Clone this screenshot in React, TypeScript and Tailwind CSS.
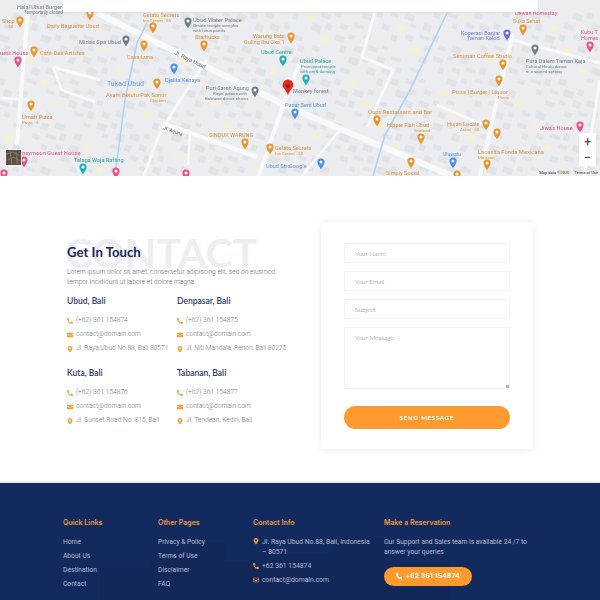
import { FaPhoneAlt, FaEnvelope, FaRegEnvelope, FaMapMarkerAlt } from "react-icons/fa";

type Label = [string, number, number, string, number?, string?];

const ORANGE = "#dc9344";
const PINK = "#e4558a";
const TEAL = "#2fa5a8";
const BLUE = "#5b93ea";
const GREY = "#76808a";
const INDIGO = "#7579d8";

const labels: Label[] = [
  ["Halal Ubud Burger", 17, 9, GREY, 5.6],
  ["Temporarily closed", 24, 14, GREY, 4.6],
  ["Shop", 2, 23, ORANGE, 5.6],
  ["· $$", 6, 28, ORANGE, 4.4],
  ["Gelato Secrets", 143, 17, ORANGE, 5.6],
  ["Ice Cream · $$", 143, 22, ORANGE, 4.4],
  ["Daily Baguette Ubud", 47, 28, ORANGE, 5.8],
  ["Ubud Water Palace", 193, 22, GREY, 5.8],
  ["Ornate temple complex", 193, 27, GREY, 4.4],
  ["with lotus ponds", 193, 32, GREY, 4.4],
  ["Starbucks", 195, 39, ORANGE, 5.6],
  ["Midas Spa Ubud", 79, 44, GREY, 5.8],
  ["Warung Babi", 253, 38, ORANGE, 5.6],
  ["Guling Ibu Oka 1", 244, 44, ORANGE, 5.6],
  ["Ubud Centre", 261, 54, TEAL, 5.6],
  ["uest House", 0, 55, PINK, 5.6],
  ["Café Des Artistes", 40, 55, ORANGE, 5.8],
  ["Casa Luna", 127, 59, ORANGE, 5.6],
  ["Tukad Ubud", 107, 86, "#6a9edc", 7],
  ["Djelita Kebaya", 165, 82, BLUE, 5.6],
  ["Ayam Betutu Pak Sanur", 106, 97, ORANGE, 5.8],
  ["Chicken", 150, 102, ORANGE, 4.4],
  ["Puri Saren Agung", 206, 90, GREY, 5.6],
  ["Royal palace with", 213, 95, GREY, 4.4],
  ["Balinese dance shows", 205, 100, GREY, 4.4],
  ["Umah Pizza", 22, 119, ORANGE, 5.8],
  ["Pizza · $", 22, 124, ORANGE, 4.4],
  ["SINDUK WARUNG", 209, 137, ORANGE, 5.6],
  ["Gelato Secrets", 275, 150, ORANGE, 5.6],
  ["Ice Cream · $$", 275, 155, ORANGE, 4.4],
  ["neymoon Guest House", 22, 155, PINK, 5.8],
  ["Telaga Waja Rafting", 74, 162, TEAL, 5.6],
  ["Ubud Stro", 266, 168, BLUE, 5.6],
  ["Google", 289, 168, "#8596b0", 5.6],
  ["Pasar Seni Ubud", 285, 107, BLUE, 5.6],
  ["Ubud Palace", 300, 63, TEAL, 5.6],
  ["Prominent temple", 301, 68, TEAL, 4.4],
  ["with art & dancing", 300, 73, TEAL, 4.4],
  ["Monkey forest", 293, 93, GREY, 5.6],
  ["Dewan Homestay", 515, 15, PINK, 5.4],
  ["Suka Sehat", 513, 23, ORANGE, 5.4],
  ["Koperasi Banjar", 461, 35, INDIGO, 5.6],
  ["Taman Kelod", 467, 40, INDIGO, 5.6],
  ["Kubu T", 581, 34, PINK, 5.4],
  ["Homes", 581, 40, PINK, 5.4],
  ["Seniman Coffee Studio", 453, 58, ORANGE, 5.8],
  ["Pura Dalem Taman Kaja", 526, 63, GREY, 5.6],
  ["Cultural Hindu dance", 526, 68, GREY, 4.4],
  ["in a sacred setting", 526, 73, GREY, 4.4],
  ["Pizza | Burger | Liquor", 452, 94, ORANGE, 5.8],
  ["Pizza", 498, 99, ORANGE, 4.4],
  ["Oops Restaurant and Bar", 368, 114, ORANGE, 5.8],
  ["Hippie Fish Ubud", 387, 127, ORANGE, 5.6],
  ["Seafood", 414, 132, ORANGE, 4.4],
  ["Hujan Locale", 447, 126, ORANGE, 5.6],
  ["Asian · $$", 460, 131, ORANGE, 4.4],
  ["Jiwa's House", 540, 130, PINK, 5.6],
  ["Lacasita Fonda Mexicana", 478, 154, ORANGE, 5.8],
  ["Mexican", 478, 159, ORANGE, 4.4],
  ["Uluwatu", 443, 156, BLUE, 5],
  ["Simply Social", 386, 175, ORANGE, 5.6],
];

const pins: [number, number, string][] = [
  [20, 22, "#e8962a"], [90, 15, "#e8962a"], [153, 28, "#e8962a"], [144, 46, "#e8962a"], [34, 52, "#e8962a"],
  [157, 84, "#e8962a"], [31, 106, "#e8962a"], [245, 144, "#e8962a"], [270, 149, "#e8962a"], [204, 46, "#e8962a"],
  [291, 38, "#e8962a"], [523, 30, "#e8962a"], [503, 65, "#e8962a"], [499, 81, "#e8962a"], [377, 121, "#e8962a"],
  [421, 139, "#e8962a"], [486, 125, "#e8962a"], [497, 134, "#e8962a"], [411, 163, "#e8962a"], [487, 165, "#e8962a"],
  [457, 176, "#e8962a"],
  [18, 62, "#ec4f86"], [24, 162, "#ec4f86"], [4, 175, "#ec4f86"], [116, 173, "#ec4f86"], [186, 175, "#ec4f86"],
  [590, 47, "#ec4f86"], [580, 127, "#ec4f86"],
  [283, 61, "#22b0b5"], [83, 169, "#22b0b5"], [306, 80, "#22b0b5"],
  [174, 69, "#4a8fee"], [295, 114, "#4a8fee"], [321, 164, "#4a8fee"], [453, 163, "#4a8fee"],
  [126, 41, "#6f7f8a"], [188, 23, "#6f7f8a"], [255, 92, "#6f7f8a"], [535, 50, "#6f7f8a"],
  [507, 35, "#6b6fd4"],
];

const roads: [string, number][] = [
  ["M97 13 L213 70 L300 112 L443 172 L470 182", 6],
  ["M28 10 L22 80 L17 145", 4],
  ["M207 60 L180 100 L160 133 L143 178", 3],
  ["M300 62 L285 100 L258 178", 4],
  ["M513 33 L497 100 L480 176", 4],
  ["M513 40 L600 63", 3],
  ["M375 12 L362 57 L393 70 L367 127", 3],
  ["M163 123 L257 157", 4],
  ["M53 67 L100 80", 3],
  ["M53 67 L62 90 L95 102", 2.5],
  ["M0 98 L30 100", 2.5],
  ["M437 105 L500 132", 2.5],
  ["M600 80 L584 178", 3],
  ["M340 130 L300 178", 2.5],
  ["M190 135 L188 165", 2.5],
];

// filler buildings on a loose grid, no randomness so the picture stays put
const blocks = Array.from({ length: 43 * 15 }, (_, i) => {
  const c = i % 43;
  const r = Math.floor(i / 43);
  const k = c * 7 + r * 13;
  return { x: c * 14 + (r % 2) * 5, y: 12 + r * 11, w: 6 + (k % 3) * 2, h: 4 + (k % 4), skip: k % 5 === 0, yellow: k % 11 === 0 };
}).filter((b) => !b.skip);

function MapArt() {
  return (
    <svg viewBox="0 0 600 176" className="block h-[176px] w-[600px] blur-[0.4px]">
      <rect width="600" height="176" fill="#ebedf0" />
      {blocks.map((b, i) => (
        <rect
          key={i}
          x={b.x}
          y={b.y}
          width={b.w}
          height={b.h}
          fill={b.yellow ? "#f6efd3" : "#e1e3e7"}
          transform={`rotate(20 ${b.x} ${b.y})`}
        />
      ))}
      {roads.map(([d, w], i) => (
        <path key={i} d={d} fill="none" stroke="#f8f9fa" strokeWidth={w} strokeLinejoin="round" />
      ))}
      <path d="M147 23 L137 43 L125 100 L115 176" fill="none" stroke="#b0d2f3" strokeWidth="1.5" />
      <path d="M447 13 L410 90 L385 135 L373 176" fill="none" stroke="#b0d2f3" strokeWidth="1.7" />
      <text x="174" y="54" fontSize="5.6" fill="#6a6a6a" transform="rotate(26 174 54)" fontFamily="Roboto, sans-serif">Jl. Raya Ubud</text>
      <text x="163" y="129" fontSize="4.8" fill="#6a6a6a" transform="rotate(20 163 129)" fontFamily="Roboto, sans-serif">Jl. Arjuna</text>
      {pins.map(([x, y, c], i) => (
        <g key={i}>
          <path d={`M${x} ${y + 5.5} C${x - 1} ${y + 3} ${x - 3.6} ${y + 1} ${x - 3.6} ${y - 2} A3.600 3.600 0 1 1 ${x + 3.6} ${y - 2} C${x + 3.6} ${y + 1} ${x + 1} ${y + 3} ${x} ${y + 5.5}Z`} fill={c} />
          <circle cx={x} cy={y - 2} r="1.500" fill="#ffffff" />
        </g>
      ))}
      {labels.map(([t, x, y, c, s], i) => (
        <text key={i} x={x} y={y} fill={c} fontSize={s} fontFamily="Roboto, sans-serif">{t}</text>
      ))}
      <path d="M288 96 C286 90 282.500 88 282.500 86 A5.500 6 0 1 1 293.500 86 C293.500 88 290 90 288 96Z" fill="#e02b20" transform="translate(0 -0.500)" />
      <circle cx="288" cy="86" r="1.700" fill="#8f1610" />
    </svg>
  );
}

function MapSection() {
  return (
    <section className="relative h-[176px] overflow-hidden">
      <MapArt />
      {/* site header sliding over the map */}
      <div className="absolute left-[63px] top-0 h-[12px] w-[475px] bg-white shadow-[0_1px_2px_rgba(0,0,0,0.08)]" />
      <svg viewBox="0 0 17 17" className="absolute left-[5px] top-[149px] h-[17px] w-[17px]">
        <rect width="17" height="17" fill="#f4f4f4" />
        <rect x="1" y="1" width="15" height="15" fill="#5d5345" />
        <path d="M2 5L8 3L14 6M3 11L9 8L15 12M5 2L7 15M11 3L12 15" stroke="#857a66" strokeWidth="1" fill="none" />
      </svg>
      <div className="absolute left-[579px] top-[133px] flex h-[33px] w-[17px] flex-col items-center justify-center bg-white text-[#555]">
        <span className="text-[13px] leading-[16px] font-['Roboto',sans-serif] font-medium">+</span>
        <span className="text-[13px] leading-[16px] font-['Roboto',sans-serif] font-medium">−</span>
      </div>
      <div className="absolute bottom-0 right-[2px] flex gap-[5px] text-[4px] leading-[7px] text-[#333] font-['Roboto',sans-serif]">
        <span>Map data ©2020</span>
        <span>Terms of Use</span>
      </div>
    </section>
  );
}

const offices = [
  { city: "Ubud, Bali", phone: "(+62) 361 154874", addr: "Jl. Raya Ubud No.88, Bali 80571" },
  { city: "Denpasar, Bali", phone: "(+62) 361 154875", addr: "Jl. Niti Mandala, Renon, Bali 80225" },
  { city: "Kuta, Bali", phone: "(+62) 361 154876", addr: "Jl. Sunset Road No. 815, Bali" },
  { city: "Tabanan, Bali", phone: "(+62) 361 154877", addr: "Jl. Tendean, Kediri, Bali" },
];

function Office({ office }: { office: (typeof offices)[number] }) {
  const rows = [
    { icon: <FaPhoneAlt className="h-[6px] w-[6px]" />, text: office.phone },
    { icon: <FaEnvelope className="h-[6px] w-[6px]" />, text: "contact@domain.com" },
    { icon: <FaMapMarkerAlt className="h-[6.500px] w-[6.500px]" />, text: office.addr },
  ];
  return (
    <div className="h-[72px]">
      <h4 className="text-[8.500px] leading-[12px] font-semibold text-[#2b3a67] font-['Lato',sans-serif]">{office.city}</h4>
      <ul className="mt-[9px] flex flex-col gap-[4.300px]">
        {rows.map((r) => (
          <li key={r.text} className="flex h-[10px] items-center gap-[3px] text-[6.650px] whitespace-nowrap font-light text-[#70747c] font-['Roboto',sans-serif]">
            <span className="flex w-[6px] justify-center text-[#ff9a2e]">{r.icon}</span>
            {r.text}
          </li>
        ))}
      </ul>
    </div>
  );
}

function ContactForm() {
  const inputCls =
    "h-[20px] w-full border border-[#f4f4f6] bg-white px-[10px] text-[6.500px] font-light font-['Lato',sans-serif] placeholder:text-[#6a6d78]";
  return (
    <form className="flex h-[227px] w-[212px] flex-col rounded-[3px] bg-white px-[23px] pt-[21px] shadow-[0_1px_8px_rgba(20,30,70,0.08)]">
      <div className="flex flex-col gap-[8px]">
        <input className={inputCls} placeholder="Your Name" />
        <input className={inputCls} placeholder="Your Email" />
        <input className={inputCls} placeholder="Subject" />
        <div className="relative h-[62px]">
          <textarea
            className="h-[62px] w-full resize-none border border-[#f4f4f6] bg-white px-[10px] py-[5px] text-[6.500px] font-light font-['Lato',sans-serif] placeholder:text-[#6a6d78]"
            placeholder="Your Message"
          />
          {/* tiny resize grip */}
          <span className="absolute bottom-[1px] right-[1px] h-[3px] w-[3px] bg-[#b5b5b5]" />
        </div>
      </div>
      <button
        type="button"
        className="mt-[17px] h-[23px] rounded-full bg-[#ff9a2e] text-[6px] font-bold tracking-[0.8px] text-white font-['Lato',sans-serif]"
      >
        SEND MESSAGE
      </button>
    </form>
  );
}

function ContactSection() {
  return (
    <section className="flex h-[305px] justify-between bg-white pl-[67px] pr-[67px] pt-[46px]">
      <div className="relative w-[240px] pt-[20px]">
        <span className="absolute left-[-2px] top-[5.500px] text-[41px] leading-[50px] font-bold text-[#eceef2] font-['Lato',sans-serif]">
          CONTACT
        </span>
        <h2 className="relative text-[13.200px] leading-[20px] font-bold text-[#14275e] font-['Lato',sans-serif]">Get In Touch</h2>
        <p className="relative mt-[4.500px] w-[225px] text-[6.650px] leading-[10px] font-light text-[#666a73] font-['Roboto',sans-serif]">
          Lorem ipsum dolor sit amet, consectetur adipiscing elit, sed do eiusmod tempor incididunt ut labore et dolore magna
        </p>
        <div className="mt-[8px] grid w-[240px] grid-cols-[110px_130px]">
          {offices.map((o) => (
            <Office key={o.city} office={o} />
          ))}
        </div>
      </div>
      <ContactForm />
    </section>
  );
}

const quickLinks = ["Home", "About Us", "Destination", "Contact"];
const otherPages = ["Privacy & Policy", "Terms of Use", "Disclaimer", "FAQ"];

function LinkColumn({ title, items, width }: { title: string; items: string[]; width: string }) {
  return (
    <div className={width}>
      <h5 className="text-[7px] leading-[10px] font-semibold text-[#ec9a3c] font-['Inter',sans-serif]">{title}</h5>
      <ul className="mt-[8.500px] flex flex-col gap-[4.200px] text-[6.700px] leading-[10px] text-[#b2bbd0] font-['Roboto',sans-serif]">
        {items.map((i) => (
          <li key={i}>{i}</li>
        ))}
      </ul>
    </div>
  );
}

function Footer() {
  return (
    <footer className="relative h-[119px] overflow-hidden border-t-2 border-[#eceef1] bg-[#132a5e] pl-[63px] pt-[35px]">
      {/* faint skyline behind the columns */}
      <svg viewBox="0 0 600 117" className="absolute inset-0 h-[117px] w-[600px]">
        <path d="M100 117V85H150V75H185V60H225V78H280V70H330V55H385V80H450V117Z" fill="#122859" />
      </svg>
      <div className="relative flex">
        <LinkColumn title="Quick Links" items={quickLinks} width="w-[95px]" />
        <LinkColumn title="Other Pages" items={otherPages} width="w-[95px]" />
        <div className="w-[131px]">
          <h5 className="text-[7px] leading-[10px] font-semibold text-[#ec9a3c] font-['Inter',sans-serif]">Contact Info</h5>
          <ul className="mt-[8.500px] flex flex-col gap-[4.200px] text-[6.800px] leading-[10px] text-[#b2bbd0] font-['Roboto',sans-serif]">
            <li className="flex gap-[3px]">
              <FaMapMarkerAlt className="mt-[1.500px] h-[6.500px] w-[6px] shrink-0 text-[#ff9a2e]" />
              <span className="w-[109px]">Jl. Raya Ubud No.88, Bali, Indonesia – 80571</span>
            </li>
            <li className="flex items-center gap-[3px]">
              <FaPhoneAlt className="h-[6px] w-[6px] text-[#ff9a2e]" />
              +62 361 154874
            </li>
            <li className="flex items-center gap-[3px]">
              <FaRegEnvelope className="h-[6px] w-[6px] text-[#ff9a2e]" />
              contact@domain.com
            </li>
          </ul>
        </div>
        <div className="w-[145px]">
          <h5 className="text-[7px] leading-[10px] font-semibold text-[#ec9a3c] font-['Inter',sans-serif]">Make a Reservation</h5>
          <p className="mt-[8.500px] text-[6.700px] leading-[10px] text-[#b2bbd0] font-['Roboto',sans-serif]">
            Our Support and Sales team is available 24 /7 to answer your queries
          </p>
          <button
            type="button"
            className="mt-[10.500px] flex h-[19px] w-[88px] items-center justify-center gap-[3px] rounded-full bg-[#ff9a2e] text-[6.500px] font-bold tracking-[0.3px] text-white font-['Inter',sans-serif]"
          >
            <FaPhoneAlt className="h-[6.500px] w-[6.500px]" />
            +62 361 154874
          </button>
        </div>
      </div>
    </footer>
  );
}

export default function App() {
  return (
    <div className="h-[600px] w-[600px] overflow-hidden bg-white">
      <MapSection />
      <ContactSection />
      <Footer />
    </div>
  );
}
